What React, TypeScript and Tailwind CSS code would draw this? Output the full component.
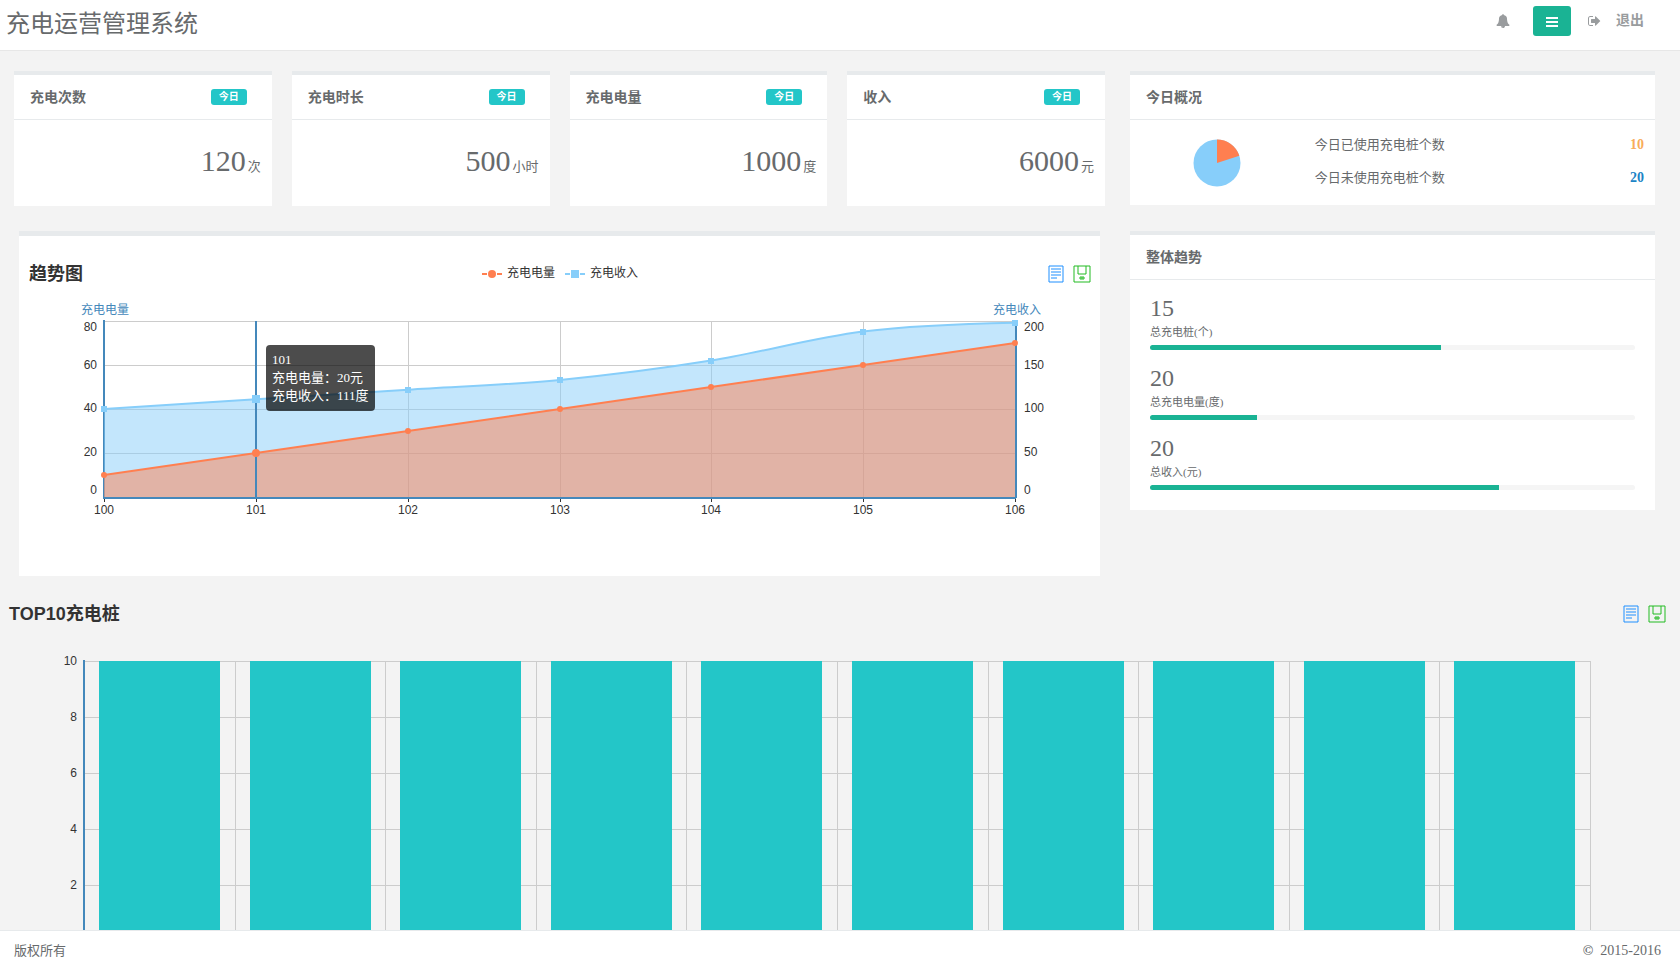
import React from "react";

const SERIF = "font-['Liberation_Serif','Noto_Sans_CJK_SC',serif]";
const SANS = "font-['Liberation_Sans','Noto_Sans_CJK_SC',sans-serif]";

function BellIcon() {
  return (
    <svg viewBox="0 0 1792 1792" className="size-3.5 fill-current" aria-hidden="true">
      <path d="M912 1696q0-16-16-16-59 0-101.5-42.5t-42.5-101.5q0-16-16-16t-16 16q0 73 51.5 124.5t124.5 51.5q16 0 16-16zm816-288q0 52-38 90t-90 38h-448q0 106-75 181t-181 75-181-75-75-181h-448q-52 0-90-38t-38-90q50-42 91-88t85-119.5 74.5-158.5 50-206 19.5-260q0-152 117-282.5t307-158.5q-8-19-8-39 0-40 28-68t68-28 68 28 28 68q0 20-8 39 190 28 307 158.5t117 282.5q0 139 19.5 260t50 206 74.5 158.5 85 119.5 91 88z" />
    </svg>
  );
}

function SignOutIcon() {
  return (
    <svg viewBox="0 0 1664 1792" className="h-[14px] w-[13px] fill-current" aria-hidden="true">
      <path d="M640 1440q0 4 1 20t.5 26.5-3 23.5-10 19.5-20.5 6.5h-320q-119 0-203.5-84.5t-84.5-203.5v-704q0-119 84.5-203.5t203.5-84.5h320q13 0 22.5 9.5t9.5 22.5q0 4 1 20t.5 26.5-3 23.5-10 19.5-20.5 6.5h-320q-66 0-113 47t-47 113v704q0 66 47 113t113 47h312l11.5 1 11.5 3 8 5.5 7 9 2 13.5zm928-544q0 26-19 45l-544 544q-19 19-45 19t-45-19-19-45v-288h-448q-26 0-45-19t-19-45v-384q0-26 19-45t45-19h448v-288q0-26 19-45t45-19 45 19l544 544q19 19 19 45z" />
    </svg>
  );
}

function BarsIcon() {
  return (
    <svg viewBox="0 0 12 10" className="mt-0.5 h-2.5 w-3 fill-current" aria-hidden="true">
      <rect y="0" width="12" height="2" />
      <rect y="4" width="12" height="2" />
      <rect y="8" width="12" height="2" />
    </svg>
  );
}

function DataViewIcon() {
  return (
    <svg viewBox="0 0 16 18" className="h-[18px] w-4 fill-[#1e90ff]/50" aria-hidden="true">
      <rect x="1" width="14" height="2" />
      <rect x="1" y="16" width="14" height="2" />
      <rect y="1" width="2" height="16" />
      <rect x="14" y="1" width="2" height="16" />
      <rect x="3" y="3" width="10" height="2" />
      <rect x="3" y="6" width="10" height="2" />
      <rect x="3" y="9" width="10" height="2" />
      <rect x="3" y="12" width="6" height="2" />
    </svg>
  );
}

function SaveIcon() {
  return (
    <svg viewBox="0 0 18 18" className="size-[18px] fill-[#22bb22]/50" aria-hidden="true">
      <rect x="1" width="16" height="2" />
      <rect x="1" y="16" width="16" height="2" />
      <rect y="1" width="2" height="16" />
      <rect x="16" y="1" width="2" height="16" />
      <rect x="4" y="1" width="2" height="8" />
      <rect x="12" y="1" width="2" height="8" />
      <rect x="5" y="8" width="8" height="2" />
      <rect x="6" y="12" width="6" height="2" />
      <rect x="7" y="11" width="4" height="4" />
    </svg>
  );
}

function Toolbox() {
  return (
    <div className="flex items-center justify-end gap-[9px]">
      <button type="button" aria-label="数据视图">
        <DataViewIcon />
      </button>
      <button type="button" aria-label="保存为图片">
        <SaveIcon />
      </button>
    </div>
  );
}

function CardTitle({ title, badge }: { title: string; badge?: string }) {
  return (
    <div className="flex h-[45px] items-center justify-between border-b border-[#e7eaec] pr-[25px] pl-4">
      <h5 className="pt-0.5 text-sm leading-5 font-bold">{title}</h5>
      {badge && (
        <span className="flex h-4 w-9 items-center justify-center rounded-[3px] bg-[#23c6c8] text-[10px] leading-4 font-bold text-white">
          {badge}
        </span>
      )}
    </div>
  );
}

const stats = [
  { title: "充电次数", value: "120", unit: "次" },
  { title: "充电时长", value: "500", unit: "小时" },
  { title: "充电电量", value: "1000", unit: "度" },
  { title: "收入", value: "6000", unit: "元" },
];

function StatCard({ title, value, unit }: (typeof stats)[number]) {
  return (
    <section className="border-t-4 border-[#e7eaec] bg-white">
      <CardTitle title={title} badge="今日" />
      <div className="flex h-[86px] items-baseline justify-end gap-0.5 px-[11px] pt-[23px]">
        <span className="text-3xl leading-9">{value}</span>
        <span className="text-[13px] leading-5">{unit}</span>
      </div>
    </section>
  );
}

const PLOT = { left: 85, top: 33, width: 911, height: 176 };
const days = ["100", "101", "102", "103", "104", "105", "106"];
const energy = [10, 20, 30, 40, 50, 60, 70];
const income = [100, 111, 122, 133, 155, 188, 198];
const bottom = PLOT.top + PLOT.height;
const right = PLOT.left + PLOT.width;
const px = (i: number) => Math.round(PLOT.left + (i * PLOT.width) / 6);
const energyY = (v: number) => bottom - (v / 80) * PLOT.height;
const incomeY = (v: number) => bottom - (v / 200) * PLOT.height;

function smoothPath(ys: number[]) {
  const reach = 50;
  const last = ys.length - 1;
  const rise = (i: number) => (i === 0 || i === last ? 0 : (ys[i + 1] - ys[i - 1]) / 6);
  let d = `M${px(0)} ${ys[0]}`;
  for (let i = 0; i < last; i++) {
    const start = i === 0 ? `${px(0)} ${ys[0]}` : `${px(i) + reach} ${ys[i] + rise(i)}`;
    const end = i + 1 === last ? `${px(last) - reach} ${ys[last] + 1}` : `${px(i + 1) - reach} ${ys[i + 1] - rise(i + 1)}`;
    d += `C${start} ${end} ${px(i + 1)} ${ys[i + 1]}`;
  }
  return d;
}

const labelYs = [39, 77, 120, 164, 202];

function TrendChart() {
  const incomeLine = smoothPath(income.map(incomeY));
  const energyLine = energy.map((v, i) => `${i ? "L" : "M"}${px(i)} ${energyY(v)}`).join("");
  const close = `L${right} ${bottom}L${PLOT.left} ${bottom}Z`;
  return (
    <svg viewBox="0 0 1081 288" className={`block w-full text-xs ${SANS}`} role="img" aria-label="趋势图">
      {[0, 1, 2, 3].map((i) => (
        <rect key={i} x={PLOT.left} y={PLOT.top + i * 44} width={PLOT.width} height="1" className="fill-[#ccc]" />
      ))}
      {days.map((d, i) => (
        <rect key={d} x={px(i)} y={PLOT.top} width="1" height={PLOT.height} className="fill-[#ccc]" />
      ))}
      <rect x={PLOT.left - 1} y={PLOT.top - 1} width="2" height={PLOT.height + 2} className="fill-[#4488bb]" />
      <rect x={right} y={PLOT.top} width="2" height={PLOT.height + 1} className="fill-[#4488bb]" />
      <path d={incomeLine + close} className="fill-[#87cefa]/50" />
      <path d={incomeLine} className="fill-none stroke-[#87cefa] stroke-2" />
      <path d={energyLine + close} className="fill-[#ff7f50]/50" />
      <path d={energyLine} className="fill-none stroke-[#ff7f50] stroke-2" />
      <rect x={px(1) - 1} y={PLOT.top} width="2" height={PLOT.height} className="fill-[#4488bb]" />
      <rect x={PLOT.left - 1} y={bottom} width={PLOT.width + 2} height="2" className="fill-[#4488bb]" />
      {income.map((v, i) => {
        const r = i === 1 ? 4 : 3;
        return (
          <rect key={i} x={px(i) - r} y={Math.round(incomeY(v)) - r} width={r * 2} height={r * 2} className="fill-[#87cefa]" />
        );
      })}
      {energy.map((v, i) => (
        <circle key={i} cx={px(i)} cy={energyY(v)} r={i === 1 ? 4 : 3} className="fill-[#ff7f50]" />
      ))}
      {days.map((d, i) => (
        <g key={d}>
          <rect x={px(i)} y={bottom + 2} width="1" height="3" className="fill-[#333]" />
          <text x={px(i)} y={bottom + 17} textAnchor="middle" className="fill-[#333]">
            {d}
          </text>
        </g>
      ))}
      {["80", "60", "40", "20", "0"].map((t, i) => (
        <text key={t} x="78" y={labelYs[i] + 4} textAnchor="end" className="fill-[#333]">
          {t}
        </text>
      ))}
      {["200", "150", "100", "50", "0"].map((t, i) => (
        <text key={t} x="1005" y={labelYs[i] + 4} className="fill-[#333]">
          {t}
        </text>
      ))}
      <text x={PLOT.left + 1} y="26" textAnchor="middle" className="fill-[#4488bb]">
        充电电量
      </text>
      <text x={right + 2} y="26" textAnchor="middle" className="fill-[#4488bb]">
        充电收入
      </text>
    </svg>
  );
}

function Legend() {
  return (
    <div className="flex items-center gap-2.5 text-xs leading-4">
      <span className="flex items-center gap-[5px]">
        <svg viewBox="0 0 20 8" className="h-2 w-5 fill-[#ff7f50]" aria-hidden="true">
          <rect y="3" width="5" height="2" />
          <rect x="15" y="3" width="5" height="2" />
          <circle cx="10" cy="4" r="4" />
        </svg>
        <span className="pb-0.5">充电电量</span>
      </span>
      <span className="flex items-center gap-[5px]">
        <svg viewBox="0 0 20 8" className="h-2 w-5 fill-[#87cefa]" aria-hidden="true">
          <rect y="3" width="5" height="2" />
          <rect x="15" y="3" width="5" height="2" />
          <rect x="6" width="8" height="8" />
        </svg>
        <span className="pb-0.5">充电收入</span>
      </span>
    </div>
  );
}

function TrendCard() {
  return (
    <section className="mx-[5px] border-t-[5px] border-[#e7eaec] bg-white pt-6">
      <div className={`grid h-7 grid-cols-[1fr_auto_1fr] items-center pr-[9px] pl-2.5 text-[#333] ${SANS}`}>
        <h2 className="text-lg leading-7 font-bold">趋势图</h2>
        <Legend />
        <Toolbox />
      </div>
      <div className="relative">
        <TrendChart />
        <div className="absolute top-[57px] left-[247px] rounded bg-black/70 px-1.5 pt-1.5 pb-1.5 text-[13px] leading-[18px] whitespace-nowrap text-white">
          <p>101</p>
          <p>充电电量：20元</p>
          <p>充电收入：111度</p>
        </div>
      </div>
    </section>
  );
}

function TodayCard() {
  return (
    <section className="border-t-4 border-[#e7eaec] bg-white">
      <CardTitle title="今日概况" />
      <div className="flex h-[85px] items-start pr-[11px] pl-0.5">
        <div className="flex w-1/3 justify-center pt-[19px]">
          <svg viewBox="0 0 48 48" className="size-12" role="img" aria-label="充电桩使用比例">
            <circle cx="24" cy="24" r="23.5" className="fill-[#87cefa]" />
            <path d="M24 24V.5A23.5 23.5 0 0 1 46.35 16.74Z" className="fill-[#ff7f50]" />
          </svg>
        </div>
        <dl className="grid flex-1 grid-cols-[1fr_auto] gap-y-[13px] pt-[15px] pl-3 text-[13px] leading-5">
          <dt>今日已使用充电桩个数</dt>
          <dd className="text-sm leading-5 font-bold text-[#f8ac59]">10</dd>
          <dt>今日未使用充电桩个数</dt>
          <dd className="text-sm leading-5 font-bold text-[#1c84c6]">20</dd>
        </dl>
      </div>
    </section>
  );
}

const totals = [
  { value: "15", label: "总充电桩(个)", percent: 60 },
  { value: "20", label: "总充电电量(度)", percent: 22 },
  { value: "20", label: "总收入(元)", percent: 72 },
];

function TotalsCard() {
  return (
    <section className="border-t-4 border-[#e7eaec] bg-white">
      <CardTitle title="整体趋势" />
      <div className="flex flex-col gap-3.5 px-5 pt-3.5 pb-5">
        {totals.map((t) => (
          <div key={t.label}>
            <p className="text-2xl leading-7">{t.value}</p>
            <p className="pt-0.5 text-[11px] leading-4">{t.label}</p>
            <div className="mt-[5px] h-[5px] overflow-hidden rounded-full bg-[#f5f5f5]">
              <div className="h-full bg-[#1ab394]" style={{ width: `${t.percent}%` }} />
            </div>
          </div>
        ))}
      </div>
    </section>
  );
}

function TopChart() {
  const left = 84;
  const width = 1506;
  const top = 33;
  const x = (i: number) => Math.round(left + (i * width) / 10);
  return (
    <section className="pt-6">
      <div className={`flex h-7 items-center justify-between pr-3.5 pl-[9px] text-[#333] ${SANS}`}>
        <h2 className="text-lg leading-7 font-bold">TOP10充电桩</h2>
        <Toolbox />
      </div>
      <svg viewBox="0 0 1680 350" className={`block w-full text-xs ${SANS}`} role="img" aria-label="TOP10充电桩">
        {["10", "8", "6", "4", "2"].map((t, i) => (
          <g key={t}>
            <rect x={left} y={top + i * 56} width={width} height="1" className="fill-[#ccc]" />
            <text x="77" y={top + i * 56 + 4} textAnchor="end" className="fill-[#333]">
              {t}
            </text>
          </g>
        ))}
        {Array.from({ length: 10 }, (_, i) => (
          <g key={i}>
            <rect x={x(i + 1)} y={top} width="1" height="280" className="fill-[#ccc]" />
            <rect x={x(i) + 15} y={top} width="121" height="280" className="fill-[#23c6c8]" />
          </g>
        ))}
        <rect x={left - 1} y={top - 1} width="2" height="282" className="fill-[#4488bb]" />
        <rect x={left - 1} y={top + 280} width={width + 2} height="2" className="fill-[#4488bb]" />
      </svg>
    </section>
  );
}

export default function App() {
  return (
    <div className={`flex h-screen flex-col bg-[#f3f3f3] text-[#676a6c] ${SERIF}`}>
      <header className="flex h-[51px] shrink-0 items-center justify-between border-b border-[#e7e7e7] bg-white pr-9 pl-1.5">
        <h1 className="pb-0.5 text-2xl leading-8">充电运营管理系统</h1>
        <nav className="flex items-center pb-2 text-[#999c9e]">
          <a href="#notices" aria-label="通知" className="mr-[23px]">
            <BellIcon />
          </a>
          <button
            type="button"
            aria-label="菜单"
            className="mr-[17px] flex h-[30px] w-[38px] items-center justify-center rounded-[3px] bg-[#1ab394] text-white"
          >
            <BarsIcon />
          </button>
          <a href="#logout" className="flex items-center gap-[15px] text-sm leading-5 font-bold">
            <SignOutIcon />
            退出
          </a>
        </nav>
      </header>

      <main className="min-h-0 flex-1 overflow-y-auto [scrollbar-width:none]">
        <div className="grid grid-cols-[minmax(0,1091fr)_minmax(0,525fr)] items-start gap-[25px] pt-5 pr-[25px] pl-3.5">
          <div className="flex flex-col gap-[25px]">
            <div className="grid grid-cols-4 gap-5">
              {stats.map((s) => (
                <StatCard key={s.title} {...s} />
              ))}
            </div>
            <TrendCard />
          </div>
          <div className="flex flex-col gap-[26px]">
            <TodayCard />
            <TotalsCard />
          </div>
        </div>
        <TopChart />
      </main>

      <footer className="flex h-[34px] shrink-0 items-center justify-between border-t border-[#e7eaec] bg-white pt-1.5 pr-[19px] pl-3.5 text-[13px] leading-5">
        <span>版权所有</span>
        <span className="text-sm leading-5">
          <strong>©</strong>&nbsp; 2015-2016
        </span>
      </footer>
    </div>
  );
}
